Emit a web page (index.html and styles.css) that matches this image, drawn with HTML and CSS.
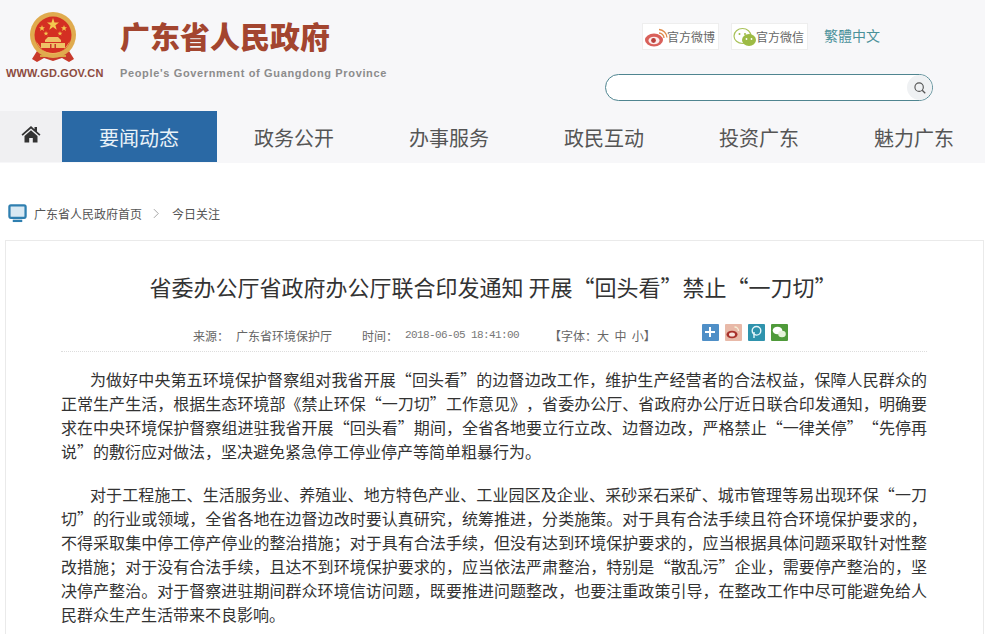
FILE: index.html
```html
<!DOCTYPE html>
<html lang="zh-CN">
<head>
<meta charset="utf-8">
<title>广东省人民政府</title>
<link rel="stylesheet" href="styles.css">
</head>
<body>
<header class="top">
  <div class="brand-row">
    <div class="logo">
      <svg class="emblem" viewBox="0 0 50 54" width="50" height="54">
        <path d="M9 40 L4 48 L9 51 L16 47 L25 50 L34 47 L41 51 L46 48 L41 40Z" fill="#c8392b"/>
        <path d="M12 45h26" stroke="#d9a441" stroke-width="2"/>
        <circle cx="25" cy="24" r="23" fill="#e0ab4e"/>
        <circle cx="25" cy="24" r="18.5" fill="#d42f22"/>
        <path d="M8 30a18 18 0 0 0 34 0l-5 7a15 15 0 0 1-24 0z" fill="#eeb85c"/>
        <path d="M25 7l1.500 4.500h4.500l-3.600 2.800 1.300 4.400-3.700-2.700-3.700 2.700 1.300-4.400-3.600-2.800h4.500z" fill="#f3c74f"/>
        <path d="M14 14l.8 2.200 2.200.1-1.700 1.400.6 2.200-1.900-1.300-1.900 1.300.6-2.200-1.700-1.400 2.200-.1zM36 14l.8 2.200 2.200.1-1.700 1.400.6 2.200-1.900-1.300-1.900 1.300.6-2.200-1.700-1.400 2.200-.1zM18 20l.6 1.700 1.800.1-1.400 1.100.5 1.700-1.500-1-1.500 1 .5-1.700-1.400-1.100 1.800-.1zM32 20l.6 1.700 1.800.1-1.400 1.100.5 1.700-1.500-1-1.500 1 .5-1.700-1.400-1.100 1.800-.1z" fill="#f3c74f"/>
        <path d="M17 29l3-3h10l3 3v2H17zM13 32h24v5H13z" fill="#efc166"/>
        <path d="M22 33h1.500v4H22zM26.500 33H28v4h-1.500z" fill="#c8392b"/>
      </svg>
      <span class="site-url">WWW.GD.GOV.CN</span>
    </div>
    <div class="brand-text">
      <h1 class="brand-title">广东省人民政府</h1>
      <p class="brand-sub">People's Government of Guangdong Province</p>
    </div>
    <div class="tools">
      <div class="tool-links">
        <a class="badge">
          <svg viewBox="0 0 24 20" width="24" height="20">
            <ellipse cx="10" cy="13" rx="9" ry="6.500" fill="#d9605a"/>
            <ellipse cx="10" cy="13.500" rx="5.500" ry="3.800" fill="#fbeeee"/>
            <circle cx="9.500" cy="13.500" r="2.400" fill="#b8403b"/>
            <path d="M15 6a5 5 0 0 1 5 5M15 2.500a8.500 8.500 0 0 1 8 8" fill="none" stroke="#e08b4a" stroke-width="1.300"/>
          </svg>
          <span>官方微博</span>
        </a>
        <a class="badge">
          <svg viewBox="0 0 24 20" width="24" height="20">
            <ellipse cx="9.500" cy="9" rx="8.500" ry="7.500" fill="#fff" stroke="#a9c25a" stroke-width="1.200"/>
            <ellipse cx="16" cy="13" rx="7" ry="6" fill="#9dbb45"/>
            <circle cx="6.500" cy="7" r="1" fill="#9dbb45"/>
            <circle cx="12" cy="7" r="1" fill="#9dbb45"/>
            <circle cx="13.500" cy="12" r=".9" fill="#fff"/>
            <circle cx="18.500" cy="12" r=".9" fill="#fff"/>
          </svg>
          <span>官方微信</span>
        </a>
        <a class="lang">繁體中文</a>
      </div>
      <div class="search">
        <span class="search-btn">
          <svg viewBox="0 0 16 16" width="14" height="14">
            <circle cx="7" cy="7" r="4.800" fill="none" stroke="#555" stroke-width="1.300"/>
            <path d="M10.500 10.500l3.500 3.500" stroke="#555" stroke-width="1.500"/>
          </svg>
        </span>
      </div>
    </div>
  </div>
  <nav class="nav">
    <a class="nav-home">
      <svg viewBox="0 0 20 18" width="20" height="18">
        <path d="M10 1L0.500 9.500l1.200 1.300L10 3.500l8.300 7.300 1.200-1.300L16 6.400V2h-2.500v2.200z" fill="#333"/>
        <path d="M3.500 11L10 5.300 16.500 11v6.500h-4.700v-4.500H8.200v4.500H3.500z" fill="#333"/>
      </svg>
    </a>
    <a class="nav-item nav-active">要闻动态</a>
    <a class="nav-item">政务公开</a>
    <a class="nav-item">办事服务</a>
    <a class="nav-item">政民互动</a>
    <a class="nav-item">投资广东</a>
    <a class="nav-item">魅力广东</a>
  </nav>
</header>
<div class="crumbs">
  <svg viewBox="0 0 20 20" width="19" height="19">
    <rect x="1.500" y="1.500" width="17" height="13" rx="1.500" fill="#d9e9f3" stroke="#2f7fb0" stroke-width="2.400"/>
    <path d="M5 16.500h10v2.500H5z" fill="#2f7fb0"/>
  </svg>
  <span class="crumb">广东省人民政府首页</span>
  <svg class="crumb-sep" viewBox="0 0 8 12" width="7" height="11">
    <path d="M1 1l5 5-5 5" fill="none" stroke="#999" stroke-width="1"/>
  </svg>
  <span class="crumb">今日关注</span>
</div>
<main class="card">
  <h2 class="title">省委办公厅省政府办公厅联合印发通知 开展“回头看”禁止“一刀切”</h2>
  <div class="meta">
    <span class="m-source">来源：</span>
    <span class="m-org">广东省环境保护厅</span>
    <span class="m-time">时间：</span>
    <span class="m-date">2018-06-05 18:41:00</span>
    <span class="m-font">【字体：大&nbsp;&nbsp;中&nbsp;&nbsp;小】</span>
    <span class="shares">
      <i class="share s-plus"><svg viewBox="0 0 16 16" width="16" height="16"><path d="M7 3h2v4h4v2H9v4H7V9H3V7h4z" fill="#fff"/></svg></i>
      <i class="share s-weibo"><svg viewBox="0 0 16 16" width="16" height="16"><ellipse cx="7" cy="10.500" rx="5.500" ry="3.800" fill="#a8322c"/><ellipse cx="7" cy="10.500" rx="3" ry="2" fill="#f7e3dc"/><path d="M9.500 3a4 4 0 0 1 4 4" fill="none" stroke="#f6f0d8" stroke-width="1.400"/></svg></i>
      <i class="share s-qq"><svg viewBox="0 0 16 16" width="16" height="16"><circle cx="8.500" cy="6.800" r="4.300" fill="none" stroke="#e6f6fa" stroke-width="1.400"/><path d="M6 8v6" stroke="#e6f6fa" stroke-width="1.400"/></svg></i>
      <i class="share s-wx"><svg viewBox="0 0 16 16" width="16" height="16"><ellipse cx="6.500" cy="6.500" rx="4.800" ry="3.800" fill="#fff"/><ellipse cx="11" cy="10" rx="3.800" ry="3.200" fill="#e6f3da"/></svg></i>
    </span>
  </div>
  <article class="content">
    <p class="para"><span class="ln first">为做好中央第五环境保护督察组对我省开展“回头看”的边督边改工作，维护生产经营者的合法权益，保障人民群众的</span><span class="ln">正常生产生活，根据生态环境部《禁止环保“一刀切”工作意见》，省委办公厅、省政府办公厅近日联合印发通知，明确要</span><span class="ln">求在中央环境保护督察组进驻我省开展“回头看”期间，全省各地要立行立改、边督边改，严格禁止“一律关停”“先停再</span><span class="ln last">说”的敷衍应对做法，坚决避免紧急停工停业停产等简单粗暴行为。</span></p>
    <p class="para"><span class="ln first">对于工程施工、生活服务业、养殖业、地方特色产业、工业园区及企业、采砂采石采矿、城市管理等易出现环保“一刀</span><span class="ln">切”的行业或领域，全省各地在边督边改时要认真研究，统筹推进，分类施策。对于具有合法手续且符合环境保护要求的，</span><span class="ln">不得采取集中停工停产停业的整治措施；对于具有合法手续，但没有达到环境保护要求的，应当根据具体问题采取针对性整</span><span class="ln">改措施；对于没有合法手续，且达不到环境保护要求的，应当依法严肃整治，特别是“散乱污”企业，需要停产整治的，坚</span><span class="ln">决停产整治。对于督察进驻期间群众环境信访问题，既要推进问题整改，也要注重政策引导，在整改工作中尽可能避免给人</span><span class="ln last">民群众生产生活带来不良影响。</span></p>
  </article>
</main>
</body>
</html>
```
FILE: styles.css
```css
* { box-sizing: border-box; }
html, body { margin: 0; padding: 0; }
body {
  width: 985px;
  height: 634px;
  overflow: hidden;
  background: #fff;
  color: #333;
  font-family: "Noto Sans CJK SC", "Liberation Sans", sans-serif;
  text-spacing-trim: space-all;
}
.top { background: #f7f7f9; height: 163px; }
.brand-row { display: flex; height: 111px; }
.logo {
  flex: none;
  width: 120px;
  padding: 11px 0 0 6px;
  display: flex;
  flex-direction: column;
}
.emblem { margin-left: 22px; display: block; }
.site-url {
  margin-top: 1px;
  font-family: "Liberation Sans", sans-serif;
  font-size: 11px;
  line-height: 14px;
  font-weight: 700;
  letter-spacing: 0.15px;
  color: #8d4b40;
  white-space: nowrap;
}
.brand-text { flex: none; width: 320px; padding-top: 17px; }
.brand-title {
  margin: 0;
  font-size: 30px;
  line-height: 36px;
  font-weight: 900;
  color: #a3452f;
}
.brand-sub {
  margin: 12px 0 0;
  font-family: "Liberation Sans", sans-serif;
  font-size: 11px;
  line-height: 16px;
  font-weight: 700;
  letter-spacing: 0.65px;
  color: #8c8c8c;
  white-space: nowrap;
}
.tools { flex: none; margin-left: 165px; padding-top: 23px; }
.tool-links { display: flex; align-items: flex-start; padding-left: 37px; }
.badge {
  flex: none;
  width: 77px;
  height: 27px;
  margin-right: 12px;
  background: #fff;
  border: 1px solid #eeeeee;
  display: flex;
  align-items: center;
  padding-left: 1px;
  font-size: 12px;
  color: #666;
  white-space: nowrap;
}
.badge svg { flex: none; margin-right: -1px; }
.lang {
  margin-left: 4px;
  font-size: 14px;
  line-height: 24px;
  color: #4a9199;
}
.search {
  margin-top: 24px;
  width: 328px;
  height: 27px;
  border: 1px solid #4f8590;
  border-radius: 14px;
  background: #fff;
  display: flex;
  justify-content: flex-end;
}
.search-btn {
  width: 25px;
  height: 25px;
  border-radius: 50%;
  background: #eff1f3;
  display: flex;
  align-items: center;
  justify-content: center;
}
.nav { display: flex; height: 51px; }
.nav-home {
  flex: none;
  width: 62px;
  background: #f0f0f2;
  display: flex;
  justify-content: center;
  padding-top: 14px;
}
.nav-item {
  flex: none;
  width: 155px;
  padding-right: 1px;
  text-align: center;
  font-size: 20px;
  line-height: 54px;
  color: #555;
}
.nav-active { background: #2a69a5; color: #e9f2f8; }
.crumbs {
  display: flex;
  align-items: center;
  height: 20px;
  margin-top: 40px;
  padding-left: 8px;
  font-size: 12px;
  color: #555;
}
.crumbs svg { margin-right: 7px; }
.crumbs .crumb-sep { margin: 0 12px 0 11px; }
.card {
  margin: 17px 1px 0 5px;
  border: 1px solid #eaeaea;
  height: 420px;
}
.title {
  margin: 27px 0 0;
  padding-right: 3px;
  text-align: center;
  font-size: 22px;
  line-height: 36px;
  font-weight: 400;
  color: #333;
}
.meta {
  display: flex;
  align-items: center;
  height: 20px;
  margin: 21px 0 0 187px;
  font-size: 12px;
  color: #666;
  white-space: nowrap;
}
.m-org { margin-left: 7px; }
.m-time { margin-left: 30px; }
.m-date { margin-left: 7px; font-family: "Liberation Mono", monospace; font-size: 11px; letter-spacing: -0.6px; color: #777; }
.m-font { margin-left: 30px; }
.shares { display: flex; gap: 6px; margin-left: 46px; margin-top: -6px; }
.share { width: 17px; height: 17px; display: flex; align-items: center; justify-content: center; border-radius: 1px; }
.s-plus { background: #4f8fc7; }
.s-weibo { background: #e8b9a8; }
.s-qq { background: #2f93ad; }
.s-wx { background: #4f9a3a; }
.content {
  margin: 6px 56px 0 55px;
  padding-top: 15px;
  border-top: 1px dotted #ddd;
}
.para { margin: 0 0 19px; font-size: 16px; line-height: 24px; color: #333; }
.ln { display: block; white-space: nowrap; text-align: justify; text-align-last: justify; }
.first { padding-left: 29px; }
.last { text-align-last: left; }
```
